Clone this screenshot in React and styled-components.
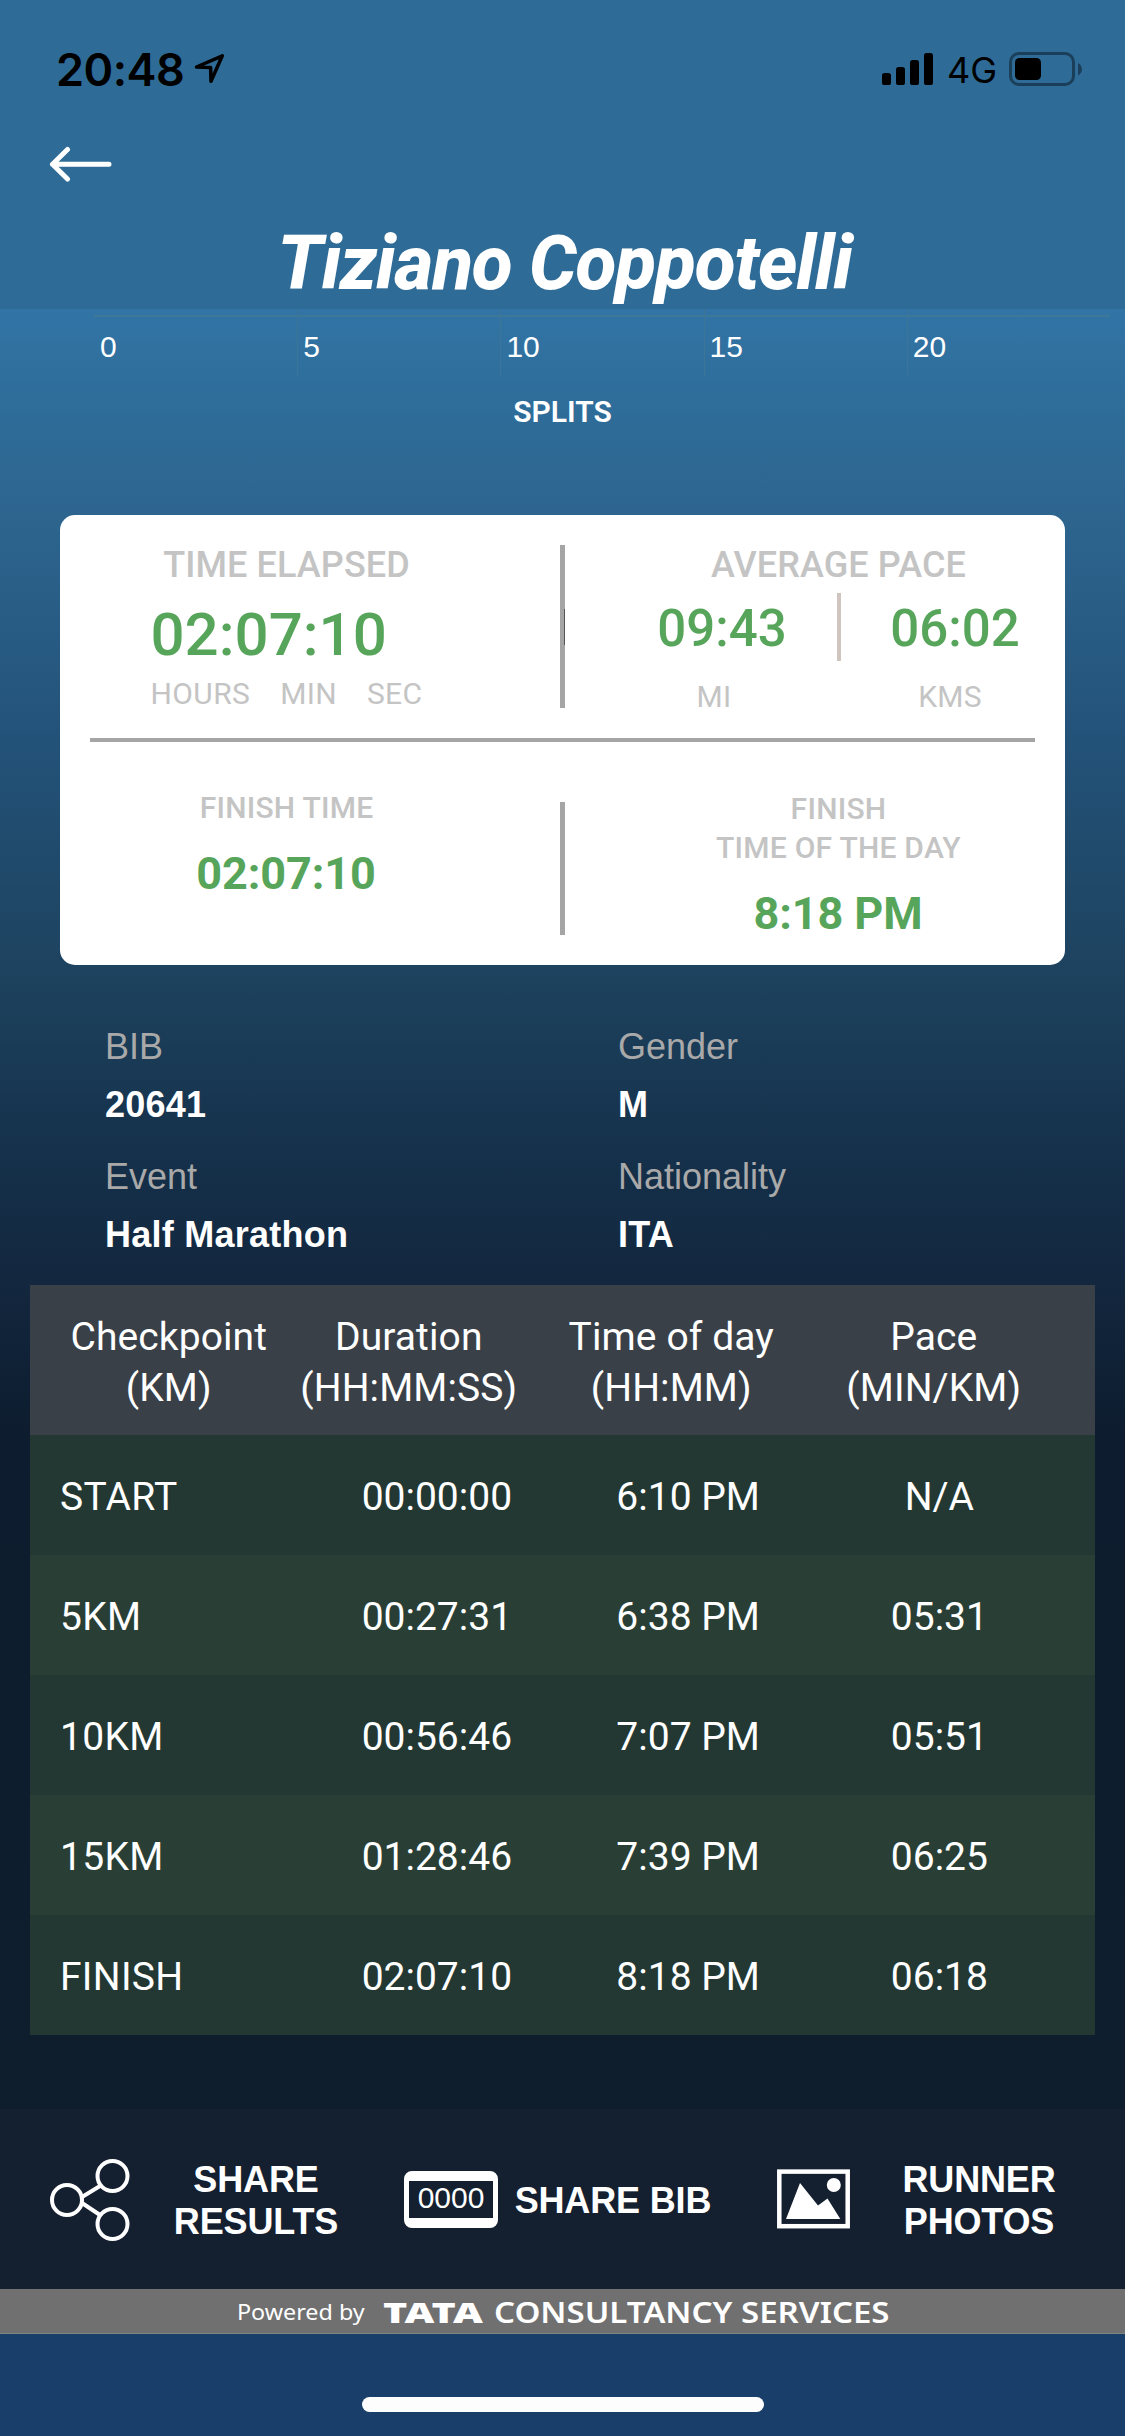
import React from "react";
import styled, { createGlobalStyle } from "styled-components";

const splits = [
    { checkpoint: "START", duration: "00:00:00", time: "6:10 PM", pace: "N/A" },
    { checkpoint: "5KM", duration: "00:27:31", time: "6:38 PM", pace: "05:31" },
    { checkpoint: "10KM", duration: "00:56:46", time: "7:07 PM", pace: "05:51" },
    { checkpoint: "15KM", duration: "01:28:46", time: "7:39 PM", pace: "06:25" },
    { checkpoint: "FINISH", duration: "02:07:10", time: "8:18 PM", pace: "06:18" },
];

const columns = [
    ["Checkpoint", "(KM)"],
    ["Duration", "(HH:MM:SS)"],
    ["Time of day", "(HH:MM)"],
    ["Pace", "(MIN/KM)"],
];

const details = [
    { label: "BIB", value: "20641" },
    { label: "Gender", value: "M" },
    { label: "Event", value: "Half Marathon" },
    { label: "Nationality", value: "ITA" },
];

const App = () => {
    return (
        <Screen>
            <GlobalStyle />
            <Header>
                <StatusBar>
                    <Clock>20:48</Clock>
                    <LocationIcon />
                    <StatusRight>
                        <SignalIcon />
                        <Network>4G</Network>
                        <BatteryIcon />
                    </StatusRight>
                </StatusBar>
                <NavBar>
                    <BackIcon />
                </NavBar>
                <RunnerName>Tiziano Coppotelli</RunnerName>
            </Header>

            <Axis>
                {[0, 5, 10, 15, 20].map((km) => (
                    <Tick key={km} $first={km === 0}>
                        {km}
                    </Tick>
                ))}
            </Axis>
            <SplitsTitle>SPLITS</SplitsTitle>

            <Card>
                <CardRow>
                    <CardCell $side="left">
                        <CardTitle>TIME ELAPSED</CardTitle>
                        <Elapsed>
                            <ElapsedValue>02:07:10</ElapsedValue>
                            <Units>
                                <span>HOURS</span>
                                <span>MIN</span>
                                <span>SEC</span>
                            </Units>
                        </Elapsed>
                    </CardCell>
                    <Divider $top={30} $height={163} $marked />
                    <CardCell $side="right">
                        <CardTitle>AVERAGE PACE</CardTitle>
                        <PaceRow>
                            <PaceValue>09:43</PaceValue>
                            <PaceDivider />
                            <PaceValue>06:02</PaceValue>
                        </PaceRow>
                        <PaceUnits>
                            <span>MI</span>
                            <span>KMS</span>
                        </PaceUnits>
                    </CardCell>
                </CardRow>
                <CardLine />
                <CardRow>
                    <CardCell $side="left" $top={51}>
                        <FinishLabel $line={30}>FINISH TIME</FinishLabel>
                        <FinishValue $gap={21}>02:07:10</FinishValue>
                    </CardCell>
                    <Divider $top={60} $height={133} />
                    <CardCell $side="right" $top={47}>
                        <FinishLabel $line={39}>
                            FINISH
                            <br />
                            TIME OF THE DAY
                        </FinishLabel>
                        <FinishValue $gap={17}>8:18 PM</FinishValue>
                    </CardCell>
                </CardRow>
            </Card>

            <Details>
                {details.map((item) => (
                    <Detail key={item.label}>
                        <dt>{item.label}</dt>
                        <dd>{item.value}</dd>
                    </Detail>
                ))}
            </Details>

            <Table>
                <TableHead>
                    {columns.map(([name, unit]) => (
                        <HeadCell key={name}>
                            {name}
                            <br />
                            {unit}
                        </HeadCell>
                    ))}
                </TableHead>
                {splits.map((row) => (
                    <TableRow key={row.checkpoint}>
                        <Cell $first>{row.checkpoint}</Cell>
                        <Cell>{row.duration}</Cell>
                        <Cell>{row.time}</Cell>
                        <Cell>{row.pace}</Cell>
                    </TableRow>
                ))}
            </Table>

            <Actions>
                <Action>
                    <ShareIcon />
                    <ActionLabel $width={170}>
                        SHARE
                        <br />
                        RESULTS
                    </ActionLabel>
                </Action>
                <Action>
                    <BibIcon>0000</BibIcon>
                    <ActionLabel $width={198}>SHARE BIB</ActionLabel>
                </Action>
                <Action>
                    <PhotoIcon />
                    <ActionLabel $width={160}>
                        RUNNER
                        <br />
                        PHOTOS
                    </ActionLabel>
                </Action>
            </Actions>

            <Sponsor>
                <Powered>Powered by</Powered>
                <Tata>TATA</Tata>
                <Consultancy>CONSULTANCY SERVICES</Consultancy>
            </Sponsor>
            <HomeArea>
                <HomeIndicator />
            </HomeArea>
        </Screen>
    );
};

const LocationIcon = () => (
    <svg width="32" height="32" viewBox="0 0 32 32" fill="none">
        <path
            d="M3.500 14L29.300 2.800L18 28.300L17.600 14.600Z"
            stroke="#000"
            strokeWidth="3.5"
            strokeLinejoin="round"
        />
    </svg>
);

const SignalIcon = () => (
    <svg width="51" height="32" viewBox="0 0 51 32" fill="#000">
        <rect x="0" y="20" width="9" height="12" rx="2.6" />
        <rect x="14" y="14" width="9" height="18" rx="2.6" />
        <rect x="28" y="7" width="9" height="25" rx="2.6" />
        <rect x="42" y="0" width="9" height="32" rx="2.6" />
    </svg>
);

const BatteryIcon = () => (
    <svg width="73" height="34" viewBox="0 0 73 34">
        <g opacity="0.4">
            <rect
                x="1.5"
                y="1.5"
                width="63"
                height="31"
                rx="8.5"
                fill="none"
                stroke="#000"
                strokeWidth="3"
            />
            <path d="M69 11C74.300 13.500 74.300 21 69 23.500Z" fill="#000" />
        </g>
        <rect x="6" y="6" width="26" height="22" rx="4.500" fill="#000" />
    </svg>
);

const BackIcon = () => (
    <svg width="64" height="36" viewBox="0 0 64 36" fill="none">
        <path
            d="M60 18.300H3.500M18.500 3.500L3.500 18.300L18.500 33"
            stroke="#fff"
            strokeWidth="5"
            strokeLinecap="round"
            strokeLinejoin="round"
        />
    </svg>
);

const ShareIcon = () => (
    <svg width="80" height="84" viewBox="0 0 80 84" fill="none">
        <g stroke="#fff" strokeWidth="4">
            <circle cx="17" cy="43" r="15" />
            <circle cx="62.500" cy="19" r="15" />
            <circle cx="62.500" cy="67" r="15" />
            <path d="M32 40L50 29M32 46L50 58" />
        </g>
    </svg>
);

const PhotoIcon = () => (
    <svg width="73" height="60" viewBox="0 0 73 60" fill="#fff">
        <rect
            x="2.3"
            y="2.6"
            width="68.4"
            height="54.600"
            fill="none"
            stroke="#fff"
            strokeWidth="4.500"
        />
        <path d="M9 50L23 14L41 36.500L50.500 29.500L63.300 50Z" />
        <circle cx="56.800" cy="16" r="7" />
    </svg>
);

const GlobalStyle = createGlobalStyle`
    * {
        box-sizing: border-box;
    }

    body {
        margin: 0;
        background: #193e69;
    }
`;

const Screen = styled.div`
    width: 1125px;
    height: 2436px;
    display: flex;
    flex-direction: column;
    overflow: hidden;
    font-family: Roboto, "Liberation Sans", sans-serif;
    color: #fff;
    background: linear-gradient(
        to bottom,
        #3174a5 309px,
        #2e6b97 430px,
        #2d658f 515px,
        #235279 740px,
        #1d425e 980px,
        #15304a 1160px,
        #13273f 1280px,
        #0d1c2e 1440px,
        #0e1e2d 2109px
    );
`;

const Header = styled.header`
    height: 309px;
    background: #2e6b97;
`;

const StatusBar = styled.div`
    height: 138px;
    padding: 0 43px 0 56px;
    display: flex;
    align-items: center;
    font-family: Inter, sans-serif;
    color: #000;
`;

const Clock = styled.span`
    width: 137px;
    font-size: 45px;
    font-weight: 600;
    letter-spacing: -0.5px;
`;

const StatusRight = styled.div`
    margin-left: auto;
    display: flex;
    align-items: center;
`;

const Network = styled.span`
    width: 62px;
    margin: 2px 0 0 14px;
    font-size: 36px;
`;

const NavBar = styled.nav`
    height: 52px;
    padding-left: 49px;
    display: flex;
    align-items: center;
`;

const RunnerName = styled.h1`
    margin: 0;
    padding: 30px 0 0 4px;
    font-size: 75px;
    font-weight: 800;
    font-style: italic;
    letter-spacing: -1.2px;
    line-height: 87px;
    text-align: center;
`;

const Axis = styled.div`
    width: 1016px;
    height: 66px;
    margin-left: 94px;
    display: grid;
    grid-template-columns: repeat(5, 1fr);
    background: linear-gradient(#3e7899, #3e7899) 0 6px / 100% 2px no-repeat;
`;

const Tick = styled.span`
    padding: 20px 0 0 5px;
    border-left: 1px solid ${(props) => (props.$first ? "transparent" : "#3c7596")};
    font-family: "Liberation Sans", Arial, sans-serif;
    font-size: 30px;
    line-height: 35px;
`;

const SplitsTitle = styled.h2`
    height: 140px;
    margin: 0;
    padding-top: 19px;
    font-size: 30px;
    font-weight: 600;
    line-height: 35px;
    text-align: center;
`;

const Card = styled.section`
    height: 450px;
    margin: 0 60px;
    border-radius: 15px;
    background: #fff;
    color: #c4c4c4;
`;

const CardRow = styled.div`
    height: 223px;
    display: flex;
`;

const CardCell = styled.div`
    flex: 1;
    padding-top: ${(props) => props.$top ?? 30}px;
    padding-left: ${(props) => (props.$side === "right" ? 47 : 0)}px;
    padding-right: ${(props) => (props.$side === "left" ? 47 : 0)}px;
    display: flex;
    flex-direction: column;
    align-items: center;
    text-align: center;
`;

const Divider = styled.div`
    position: relative;
    width: 5px;
    height: ${(props) => props.$height}px;
    margin-top: ${(props) => props.$top}px;
    background: #a5a5a5;

    &::after {
        content: "";
        display: ${(props) => (props.$marked ? "block" : "none")};
        position: absolute;
        top: 64px;
        right: 0;
        width: 1px;
        height: 36px;
        background: #555;
    }
`;

const CardLine = styled.div`
    height: 4px;
    margin: 0 30px;
    background: #a5a5a5;
`;

const CardTitle = styled.div`
    font-size: 36px;
    font-weight: 500;
    letter-spacing: 0.1px;
    line-height: 40px;
`;

const Elapsed = styled.div`
    width: 272px;
    margin-top: 15px;
    text-align: left;
`;

const ElapsedValue = styled.div`
    color: #57a55a;
    font-size: 60px;
    font-weight: 500;
    line-height: 70px;
`;

const Units = styled.div`
    margin-top: 9px;
    display: flex;
    justify-content: space-between;
    font-size: 30px;
    letter-spacing: 0.4px;
    line-height: 30px;
`;

const PaceRow = styled.div`
    margin-top: 8px;
    display: flex;
    justify-content: center;
    gap: 5px;
`;

const PaceValue = styled.span`
    width: 219px;
    padding-top: 3px;
    color: #57a55a;
    font-size: 51px;
    font-weight: 500;
    line-height: 66px;
`;

const PaceDivider = styled.div`
    width: 4px;
    height: 68px;
    background: #d0c5be;
`;

const PaceUnits = styled.div`
    width: 453px;
    margin-top: 20px;
    padding-right: 13px;
    display: flex;
    justify-content: space-between;
    font-size: 30px;
    letter-spacing: 0.3px;
    line-height: 30px;

    span {
        width: 204px;
    }
`;

const FinishLabel = styled.div`
    font-size: 30px;
    font-weight: 500;
    letter-spacing: 0.25px;
    line-height: ${(props) => props.$line}px;
`;

const FinishValue = styled.div`
    margin-top: ${(props) => props.$gap}px;
    padding-right: 1px;
    color: #57a55a;
    font-size: 45px;
    font-weight: 700;
    letter-spacing: -0.1px;
    line-height: 60px;
`;

const Details = styled.dl`
    height: 320px;
    margin: 0;
    padding: 60px 0 0 105px;
    display: grid;
    grid-template-columns: 513px 1fr;
    align-content: start;
    row-gap: 28px;
    font-family: "Liberation Sans", Arial, sans-serif;
    font-size: 36px;
    line-height: 44px;
`;

const Detail = styled.div`
    display: flex;
    flex-direction: column;
    gap: 14px;

    dt {
        color: #a9a9a9;
    }

    dd {
        margin: 0;
        font-weight: 700;
        letter-spacing: 0.25px;
    }
`;

const Table = styled.section`
    margin: 0 30px 74px;
    font-size: 39px;
`;

const TableHead = styled.div`
    height: 150px;
    padding: 27px 30px 0;
    display: grid;
    grid-template-columns: 217.5px repeat(3, 262.5px);
    background: #3a4048;
    letter-spacing: 0.1px;
    line-height: 51px;
    text-align: center;
`;

const HeadCell = styled.div`
    white-space: nowrap;
`;

const TableRow = styled.div`
    height: 120px;
    padding: 4px 30px 0;
    display: grid;
    grid-template-columns: repeat(4, 1fr);
    align-items: center;
    background: #233833;

    &:nth-child(odd) {
        background: #293f36;
    }
`;

const Cell = styled.div`
    text-align: ${(props) => (props.$first ? "left" : "center")};
    letter-spacing: ${(props) => (props.$first ? 0.3 : 0)}px;
`;

const Actions = styled.footer`
    height: 180px;
    padding: 0 66px 0 50px;
    display: flex;
    align-items: center;
    justify-content: space-between;
    background: #141f2f;
`;

const Action = styled.div`
    display: flex;
    align-items: center;

    &:nth-child(1) {
        gap: 41px;
    }

    &:nth-child(2) {
        gap: 16px;
        padding-right: 2px;
    }

    &:nth-child(3) {
        gap: 49px;
    }
`;

const ActionLabel = styled.span`
    width: ${(props) => props.$width}px;
    padding-top: 3px;
    font-family: "Liberation Sans", Arial, sans-serif;
    font-size: 36px;
    font-weight: 700;
    letter-spacing: -0.15px;
    line-height: 42px;
    text-align: center;
    white-space: nowrap;
`;

const BibIcon = styled.span`
    width: 94px;
    height: 57px;
    border: solid #fff;
    border-width: 10.5px 5px;
    border-radius: 8px;
    font-family: "Liberation Sans", Arial, sans-serif;
    font-size: 30px;
    line-height: 34px;
    text-align: center;
`;

const Sponsor = styled.div`
    height: 45px;
    padding: 1px 0 0 237px;
    display: flex;
    align-items: center;
    border-bottom: 1px solid #7d8583;
    background: #707070;
    font-family: "Noto Sans", sans-serif;
    white-space: nowrap;
`;

/* the sponsor's lettering is set wider than the regular face */
const Wide = styled.span`
    transform: scaleX(${(props) => props.$stretch});
    transform-origin: left center;
`;

const Powered = styled(Wide).attrs({ $stretch: 1.11 })`
    width: 146px;
    font-size: 21px;
`;

const Tata = styled(Wide).attrs({ $stretch: 1.42 })`
    width: 111px;
    font-size: 29px;
    font-weight: 900;
`;

const Consultancy = styled(Wide).attrs({ $stretch: 1.138 })`
    font-size: 29px;
    font-weight: 600;
`;

const HomeArea = styled.div`
    flex: 1;
    padding-top: 63px;
    background: #193e69;
`;

const HomeIndicator = styled.div`
    width: 402px;
    height: 15px;
    margin: 0 auto;
    border-radius: 8px;
    background: #fdfdfd;
`;

export default App;
